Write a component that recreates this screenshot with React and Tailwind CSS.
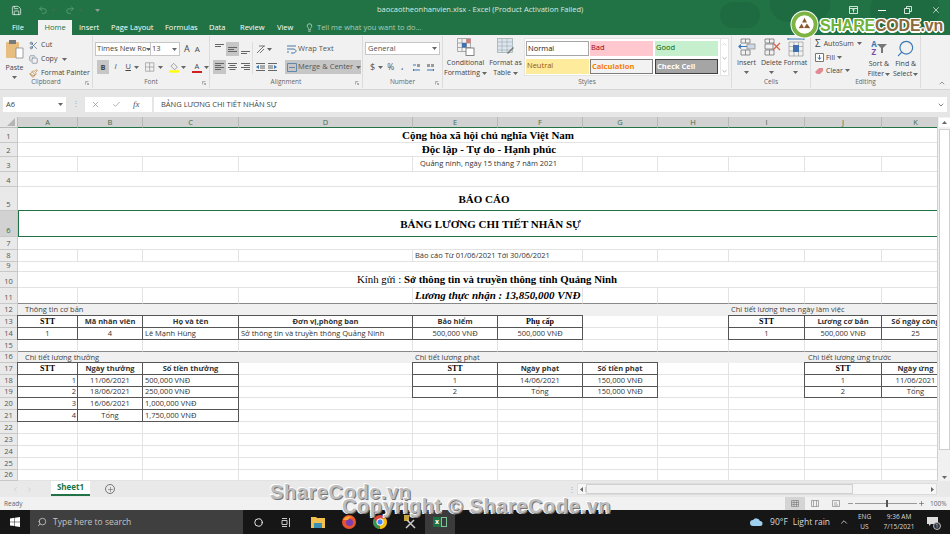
import React from "react";
import {
  Save,
  Undo2,
  Redo2,
  Lightbulb,
  Scissors,
  Copy,
  Paintbrush,
  Search,
  Circle,
  Plus,
  Minus,
  ChevronUp,
  ChevronDown,
  ChevronLeft,
  ChevronRight,
  X,
  Check,
} from "lucide-react";

const UI = "font-['Open_Sans','Noto_Sans',sans-serif]";
const SERIF = "font-['Liberation_Serif',serif]";

function Caret({ className = "" }) {
  return (
    <svg width="5" height="3" viewBox="0 0 5 3" className={`shrink-0 ${className}`}>
      <path d="M0 0h5L2.5 3z" fill="#666" />
    </svg>
  );
}

function TitleBar() {
  return (
    <div className={`relative h-[35px] bg-[#217346] text-white ${UI} overflow-hidden`}>
      <div className="absolute right-[120px] top-[-14px] w-[60px] h-[36px] rounded-full bg-[#1f6b41]" />
      <div className="absolute right-[190px] top-[2px] w-[40px] h-[26px] rounded-full bg-[#1f6b41]" />
      <div className="absolute right-[10px] top-[-10px] w-[70px] h-[40px] rounded-full bg-[#1f6b41]" />
      <div className="relative flex items-center h-[20px] pl-[11px]">
        <Save size={11} strokeWidth={1.5} />
        <Undo2 size={10} className="ml-[16px] text-[#5f9c7b]" />
        <Caret className="ml-[3px] opacity-30" />
        <Redo2 size={10} className="ml-[9px] text-[#5f9c7b]" />
        <Caret className="ml-[3px] opacity-30" />
        <Caret className="ml-[12px] invert" />
        <div className="w-[194px] ml-[277px] text-[7.5px] whitespace-nowrap text-[#dbe9e1]">
          baocaotheonhanvien.xlsx - Excel (Product Activation Failed)
        </div>
        <div className="ml-auto flex items-center pr-[9px] gap-[18px]">
          <svg width="9" height="8" viewBox="0 0 9 8">
            <path d="M.5.5h8v7h-8zM.5 2.5h8M4.5 6.5v-3M3 4.5l1.5-1.5L6 4.5" fill="none" stroke="#fff" strokeWidth=".8" />
          </svg>
          <div className="w-[8px] h-px bg-white ml-[2px]" />
          <svg width="8" height="8" viewBox="0 0 8 8">
            <path d="M.5 2.5h5v5h-5zM2.5 2.5v-2h5v5h-2" fill="none" stroke="#fff" strokeWidth=".8" />
          </svg>
          <X size={10} strokeWidth={1.6} className="ml-[1px]" />
        </div>
      </div>
      <div className="relative flex items-end h-[15px] text-[7.5px] leading-[15px]">
        <span className="ml-[12px] w-[26px]">File</span>
        <span className="w-[34px] h-[15px] bg-[#f1f1f1] text-[#217346] text-center">Home</span>
        <span className="ml-[7px] w-[32px]">Insert</span>
        <span className="w-[54px]">Page Layout</span>
        <span className="w-[44px]">Formulas</span>
        <span className="w-[31px]">Data</span>
        <span className="w-[37px]">Review</span>
        <span className="w-[28px]">View</span>
        <Lightbulb size={9} className="mb-[3px] text-[#cfe0d6]" />
        <span className="ml-[3px] text-[#a9cbb8]">Tell me what you want to do...</span>
      </div>
    </div>
  );
}

function Group({ w, label, corner = true, children }) {
  return (
    <div className={`relative flex flex-col h-[52px] mt-[1px] border-r border-[#dcdcdc] shrink-0 ${w}`}>
      <div className="flex-1 min-h-0">{children}</div>
      <div className="h-[11px] text-center text-[6.5px] leading-[10px] text-[#666]">{label}</div>
      {corner && (
        <svg width="4" height="4" viewBox="0 0 4 4" className="absolute right-[3px] bottom-[3px]">
          <path d="M.5.5h3M.5.5v3M3.5 3.5L1.5 1.5M3.5 2v1.5H2" fill="none" stroke="#888" strokeWidth=".6" />
        </svg>
      )}
    </div>
  );
}

function BigBtn({ icon, lines, w }) {
  return (
    <div className={`flex flex-col items-center text-[7px] leading-[10px] text-[#444] ${w}`}>
      <div className="h-[22px] flex items-center">{icon}</div>
      {lines.map((l, i) => (
        <div key={i} className="whitespace-nowrap flex items-center gap-[2px]">
          {l}
        </div>
      ))}
    </div>
  );
}

function Clipboard() {
  return (
    <Group w="w-[93px]" label="Clipboard">
      <div className="flex">
        <div className="w-[29px] flex flex-col items-center text-[7px] text-[#444] leading-[10px]">
          <svg width="20" height="20" viewBox="0 0 20 20" className="mt-[3px]">
            <rect x="1" y="3" width="13" height="16" rx="1" fill="#e8bd80" />
            <rect x="4" y="1" width="7" height="4" fill="#7a7a7a" />
            <path d="M11 9h7v10h-7z" fill="#fff" stroke="#888" strokeWidth=".8" />
          </svg>
          <div className="mt-[4px]">Paste</div>
          <Caret className="mt-[3px]" />
        </div>
        <div className="flex flex-col text-[7px] leading-[14px] text-[#444] pt-[2px]">
          <div className="flex items-center gap-[3px]">
            <Scissors size={9} className="text-[#4a6a8a]" /> Cut
          </div>
          <div className="flex items-center gap-[3px]">
            <Copy size={9} className="text-[#7a8a9a]" /> Copy <Caret className="ml-[2px]" />
          </div>
          <div className="flex items-center gap-[3px] whitespace-nowrap">
            <Paintbrush size={9} className="text-[#b8863c]" /> Format Painter
          </div>
        </div>
      </div>
    </Group>
  );
}

function Bars({ lines, align = "left" }) {
  return (
    <svg width="9" height="8" viewBox="0 0 9 8">
      {lines.map((y, i) => {
        const w = i % 2 ? 6 : 9;
        const x = align === "center" ? (9 - w) / 2 : align === "right" ? 9 - w : 0;
        return <rect key={y} x={x} y={y} width={w} height="1" fill="#666" />;
      })}
    </svg>
  );
}

function Font() {
  return (
    <Group w="w-[117px]" label="Font">
      <div className="pl-[2px] pt-[6px] text-[7.5px] text-[#444]">
        <div className="flex h-[14px]">
          <div className="w-[56px] bg-white border border-[#c6c6c6] flex items-center justify-between px-[1px] whitespace-nowrap overflow-hidden">
            Times New Ro <Caret />
          </div>
          <div className="w-[29px] bg-white border border-l-0 border-[#c6c6c6] flex items-center justify-between pl-[1px] pr-[2px]">
            13 <Caret />
          </div>
          <div className="ml-[4px] text-[9px] leading-[14px]">A</div>
          <div className="ml-[5px] text-[8px] leading-[14px]">A</div>
        </div>
        <div className="flex items-center h-[14px] mt-[4px] ml-[2px]">
          <div className="w-[13px] h-[14px] bg-[#c6c6c6] text-center font-bold leading-[14px]">B</div>
          <div className="w-[14px] text-center italic">I</div>
          <div className="w-[13px] text-center underline">U</div>
          <Caret />
          <svg width="10" height="10" viewBox="0 0 10 10" className="ml-[6px]">
            <path d="M.5.5h9v9h-9zM5 .5v9M.5 5h9" fill="none" stroke="#999" strokeWidth=".8" />
          </svg>
          <Caret className="ml-[3px]" />
          <svg width="11" height="11" viewBox="0 0 11 11" className="ml-[6px]">
            <path d="M5 1l4 4-3 3-4-4z" fill="#eee" stroke="#777" strokeWidth=".7" />
            <rect y="8.5" width="11" height="2.5" fill="#ffff00" />
          </svg>
          <Caret className="ml-[2px]" />
          <div className="ml-[6px] w-[11px] text-center leading-[9px] border-b-[2px] border-[#d02020]">A</div>
          <Caret className="ml-[2px]" />
        </div>
      </div>
    </Group>
  );
}

function Alignment() {
  return (
    <Group w="w-[153px]" label="Alignment">
      <div className="flex pl-[3px] pt-[6px] text-[7.5px] text-[#555]">
        <div className="flex flex-col gap-[4px] w-[39px] shrink-0">
          <div className="flex h-[14px] items-center">
            <div className="w-[13px] flex justify-center mb-[3px]"><Bars lines={[0, 2]} /></div>
            <div className="w-[13px] h-[14px] bg-[#c6c6c6] flex items-center justify-center"><Bars lines={[2, 4, 6]} /></div>
            <div className="w-[13px] flex justify-center mt-[3px]"><Bars lines={[4, 6]} /></div>
          </div>
          <div className="flex h-[14px] items-center">
            <div className="w-[13px] h-[14px] bg-[#c6c6c6] flex items-center justify-center"><Bars lines={[0, 2, 4, 6]} /></div>
            <div className="w-[13px] flex justify-center"><Bars lines={[0, 2, 4, 6]} align="center" /></div>
            <div className="w-[13px] flex justify-center"><Bars lines={[0, 2, 4, 6]} align="right" /></div>
          </div>
        </div>
        <div className="flex flex-col gap-[4px] w-[33px] shrink-0 pl-[1px] border-l border-[#dcdcdc] h-[32px]">
          <div className="flex h-[14px] items-center pl-[2px] gap-[1px]">
            <svg width="10" height="10" viewBox="0 0 10 10">
              <path d="M1 9l7-7M3 2h6M4 9l4-4" fill="none" stroke="#666" strokeWidth=".9" />
            </svg>
            <Caret />
          </div>
          <div className="flex h-[14px] items-center pl-[2px] gap-[3px]">
            <svg width="9" height="8" viewBox="0 0 9 8"><path d="M0 .5h9M4 3h5M4 5h5M0 7.5h9" stroke="#666" /><path d="M3 2L0 4l3 2z" fill="#3a78b5" /></svg>
            <svg width="9" height="8" viewBox="0 0 9 8"><path d="M0 .5h9M0 3h5M0 5h5M0 7.5h9" stroke="#666" /><path d="M6 2l3 2-3 2z" fill="#3a78b5" /></svg>
          </div>
        </div>
        <div className="flex flex-col gap-[4px] shrink-0">
          <div className="flex h-[14px] items-center gap-[1px] pl-[2px] whitespace-nowrap">
            <svg width="10" height="9" viewBox="0 0 10 9"><path d="M0 1h9M0 4h6c4 0 4 4 0 4H4M0 7h2" fill="none" stroke="#4a78a5" /></svg>
            Wrap Text
          </div>
          <div className="flex h-[14px] w-[76px] items-center gap-[1px] pl-[2px] bg-[#c6c6c6] whitespace-nowrap">
            <svg width="10" height="9" viewBox="0 0 10 9" className="shrink-0"><path d="M.5.5h9v8h-9zM2 4.500h6" fill="none" stroke="#4a78a5" strokeWidth=".8" /></svg>
            Merge & Center <Caret className="ml-[2px]" />
          </div>
        </div>
      </div>
    </Group>
  );
}

function NumberGroup() {
  return (
    <Group w="w-[80px]" label="Number">
      <div className="pl-[2px] pt-[6px] text-[7.5px] text-[#555]">
        <div className="w-[75px] h-[13px] bg-white border border-[#c6c6c6] flex items-center justify-between px-[2px]">
          General <Caret />
        </div>
        <div className="flex items-center h-[14px] mt-[5px] pl-[5px]">
          <span className="text-[9px]">$</span>
          <Caret className="ml-[3px]" />
          <span className="ml-[4px] text-[8.5px]">%</span>
          <span className="ml-[7px] font-bold">,</span>
          <svg width="9" height="9" viewBox="0 0 9 9" className="ml-[9px]"><path d="M1 2h3M1 7h7M2 6l-1 1 1 1" fill="none" stroke="#3a78b5" /><path d="M5 1h3v3H5z" fill="#999" /></svg>
          <svg width="9" height="9" viewBox="0 0 9 9" className="ml-[5px]"><path d="M1 7h7M7 6l1 1-1 1" fill="none" stroke="#3a78b5" /><path d="M1 1h3v3H1zM5 1h3v3H5z" fill="#999" /></svg>
        </div>
      </div>
    </Group>
  );
}

function StyleCell({ className, children }) {
  return <div className={`h-[15px] w-[63px] px-[1px] text-[7.5px] leading-[13px] ${className}`}>{children}</div>;
}

function Styles() {
  return (
    <Group w="w-[289px]" label="Styles" corner={false}>
      <div className="flex">
        <BigBtn
          w="w-[45px]"
          lines={["Conditional", <>Formatting <Caret /></>]}
          icon={
            <svg width="18" height="18" viewBox="0 0 18 18">
              <path d="M.5.5h13v13H.5zM.5 5h13M.5 9.500h13M5 .5v13M9.500.5v13" fill="none" stroke="#999" strokeWidth=".8" />
              <rect x="5" y="5" width="4.500" height="4.500" fill="#3f6fae" />
              <rect x="9.500" y="1" width="4" height="4" fill="#d87a7a" />
              <rect x="9" y="10" width="8" height="7.500" fill="#fff" stroke="#666" strokeWidth=".8" />
            </svg>
          }
        />
        <BigBtn
          w="w-[35px]"
          lines={["Format as", <>Table <Caret /></>]}
          icon={
            <svg width="18" height="18" viewBox="0 0 18 18">
              <rect x=".5" y=".5" width="15" height="14" fill="#dde6f0" stroke="#9aa" strokeWidth=".7" />
              <path d="M.5 4h15M.5 8h15M.5 12h15M5 .5v14M10 .5v14" stroke="#9aa" strokeWidth=".6" />
              <path d="M10 15l6-6 1 1-6 6z" fill="#777" />
            </svg>
          }
        />
        <div className="ml-[1px] mt-[2px] w-[205px] h-[38px] bg-white flex border border-[#e4e4e4]">
          <div className="grid grid-cols-[64px_65px_63px] gap-y-[2px] pt-[2px] pl-[1px]">
            <StyleCell className="bg-white border border-[#a6a6a6] text-[#222]">Normal</StyleCell>
            <StyleCell className="bg-[#ffc7ce] text-[#9c0006]">Bad</StyleCell>
            <StyleCell className="bg-[#c6efce] text-[#006100]">Good</StyleCell>
            <StyleCell className="bg-[#ffeb9c] text-[#9c5700]">Neutral</StyleCell>
            <StyleCell className="bg-[#f2f2f2] text-[#fa7d00] font-bold border border-[#7f7f7f]">Calculation</StyleCell>
            <StyleCell className="bg-[#a5a5a5] text-white font-bold border border-[#3f3f3f]">Check Cell</StyleCell>
          </div>
          <div className="flex-1 flex flex-col items-center border-l border-[#e4e4e4] ml-[2px]">
            <ChevronUp size={7} className="mt-[2px] text-[#bbb]" />
            <ChevronDown size={7} className="mt-[7px] text-[#777]" />
            <ChevronDown size={7} className="mt-[7px] text-[#777]" />
          </div>
        </div>
      </div>
    </Group>
  );
}

function CellsGroup() {
  return (
    <Group w="w-[79px]" label="Cells" corner={false}>
      <div className="flex pl-[2px]">
        <BigBtn
          w="w-[25px]"
          lines={["Insert", <Caret className="mt-[3px]" />]}
          icon={
            <svg width="18" height="18" viewBox="0 0 18 18">
              <path d="M3 1h9v4H3zM3 12h9v5H3zM7.500 1v4M7.500 12v5" fill="none" stroke="#777" strokeWidth=".8" />
              <path d="M1 8.500h8M3 6.500l-2 2 2 2" fill="none" stroke="#3a78b5" strokeWidth="1.200" />
              <rect x="9" y="6" width="8" height="5" fill="#cfd8e3" stroke="#777" strokeWidth=".6" />
            </svg>
          }
        />
        <BigBtn
          w="w-[25px]"
          lines={["Delete", <Caret className="mt-[3px]" />]}
          icon={
            <svg width="18" height="18" viewBox="0 0 18 18">
              <path d="M2 1h9v4H2zM2 12h9v5H2zM6.500 1v4M6.500 12v5M2 6h8v5H2z" fill="none" stroke="#777" strokeWidth=".8" />
              <path d="M10 5l7 7M17 5l-7 7" stroke="#d0634a" strokeWidth="1.300" />
            </svg>
          }
        />
        <BigBtn
          w="w-[23px]"
          lines={["Format", <Caret className="mt-[3px]" />]}
          icon={
            <svg width="18" height="20" viewBox="0 0 18 20">
              <path d="M1 2h16M1 1v2M17 1v2" stroke="#3a78b5" />
              <path d="M2 5h14v14H2zM2 9.500h14M2 14h14M7 5v14M11.500 5v14" fill="none" stroke="#999" strokeWidth=".7" />
              <rect x="6" y="8" width="6" height="7" fill="#3f6fae" />
            </svg>
          }
        />
      </div>
    </Group>
  );
}

function Editing() {
  return (
    <Group w="w-[110px]" label="Editing" corner={false}>
      <div className="flex text-[7px] text-[#444] leading-[13.5px] pl-[4px] pt-[1px]">
        <div className="w-[52px]">
          <div className="flex items-center gap-[3px]"><span className="text-[10px] leading-[13px]">Σ</span> AutoSum <Caret /></div>
          <div className="flex items-center gap-[2px]">
            <svg width="9" height="9" viewBox="0 0 9 9"><path d="M.5.5h8v8h-8z" fill="#fff" stroke="#777" /><path d="M4.500 2v4M3 4.500l1.500 2 1.500-2" fill="none" stroke="#3a78b5" /></svg>
            Fill <Caret />
          </div>
          <div className="flex items-center gap-[2px]">
            <svg width="9" height="8" viewBox="0 0 9 8"><path d="M0 5l4-4h4v3L5 7H2z" fill="#e28a92" /></svg>
            Clear <Caret />
          </div>
        </div>
        <BigBtn
          w="w-[25px]"
          lines={["Sort &", <>Filter <Caret className="-ml-[1px]" /></>]}
          icon={
            <div className="flex items-center text-[8px] font-bold leading-[8px] text-[#3a78b5]">
              <div className="text-center">A<br /><span className="text-[#7a4fa5]">Z</span></div>
              <svg width="10" height="9" viewBox="0 0 10 9"><path d="M0 0h10L6 4v5H4V4z" fill="#777" /></svg>
            </div>
          }
        />
        <BigBtn
          w="w-[29px]"
          lines={["Find &", <>Select <Caret className="-ml-[1px]" /></>]}
          icon={<Search size={19} strokeWidth={1.5} className="text-[#3a78b5] -scale-x-100" />}
        />
      </div>
    </Group>
  );
}

function Ribbon() {
  return (
    <div className={`relative h-[55px] bg-[#f1f1f1] border-b border-[#d4d4d4] flex ${UI}`}>
      <Clipboard />
      <Font />
      <Alignment />
      <NumberGroup />
      <Styles />
      <CellsGroup />
      <Editing />
      <ChevronUp size={8} className="absolute right-[4px] bottom-[2px] text-[#666]" />
    </div>
  );
}

function FormulaBar() {
  return (
    <div className={`h-[27px] bg-[#e6e6e6] flex items-start pt-[7px] pl-[3px] pr-[3px] text-[7.5px] text-[#444] ${UI}`}>
      <div className="w-[63px] h-[15px] bg-white flex items-center justify-between px-[3px]">
        A6 <Caret />
      </div>
      <div className="w-[19px] text-center leading-[13px] text-[#aaa]">⋮</div>
      <div className="w-[67px] h-[15px] bg-white flex items-center gap-[12px] pl-[6px] text-[#999]">
        <X size={9} />
        <Check size={9} />
        <span className={`${SERIF} italic text-[#555] text-[9px]`}>fx</span>
      </div>
      <div className="ml-[2px] flex-1 h-[15px] bg-white flex items-center justify-between pl-[7px] pr-[2px]">
        BẢNG LƯƠNG CHI TIẾT NHÂN SỰ
        <ChevronDown size={8} />
      </div>
    </div>
  );
}

const GRID_LINE = "border-r border-b border-[#e3e3e3]";
const COLS = ["A", "B", "C", "D", "E", "F", "G", "H", "I", "J", "K"];

// shorthand cell makers
const blank = (span = 1) => ({ span });
const under = () => ({ strong: true });
const head = (text, serif) => ({ text, dark: true, bold: true, serif, align: "center" });
const val = (text, align = "center") => ({ text, dark: true, align });
const sep = (text, span, pl = "pl-[2px]") => ({ text, span, gray: true, pl });

const ROWS = [
  { h: 1, cells: [{ span: 11, title: "Cộng hòa xã hội chủ nghĩa Việt Nam", pl: "pl-[8px]" }] },
  { h: 2, cells: [{ span: 11, title: "Độc lập - Tự do - Hạnh phúc", pl: "pl-[10px]" }] },
  { h: 3, cells: [blank(), blank(), blank(), blank(), { span: 2, text: "Quảng ninh, ngày 15 tháng 7 năm 2021", pl: "pl-[7px]" }, blank(), blank(), blank(), blank(), blank()] },
  { h: 4, cells: [blank(11)] },
  { h: 5, cells: [{ span: 11, title: "BÁO CÁO", big: true }] },
  { h: 6, cells: [{ span: 11, title: "BẢNG LƯƠNG CHI TIẾT NHÂN SỰ", big: true, selected: true, pl: "pl-[13px]" }] },
  { h: 7, cells: [blank(11)] },
  { h: 8, cells: [blank(), blank(), blank(), blank(), { span: 2, text: "Báo cáo Từ 01/06/2021 Tới 30/06/2021", pl: "pl-[2px]" }, blank(), blank(), blank(), blank(), blank()] },
  { h: 9, cells: [blank(11)] },
  { h: 10, cells: [{ span: 11, letter: true }] },
  { h: 11, cells: [under(), under(), under(), under(), { span: 2, salary: true }, under(), under(), under(), under(), under()] },
  { h: 12, cells: [sep("Thông tin cơ bản", 8, "pl-[7px]"), sep("Chi tiết lương theo ngày làm việc", 3)] },
  { h: 13, cells: [head("STT", true), head("Mã nhân viên"), head("Họ và tên"), head("Đơn vị,phòng ban"), head("Bảo hiểm"), head("Phụ cấp", true), blank(), blank(), head("STT", true), head("Lương cơ bản"), head("Số ngày công")] },
  { h: 14, cells: [val("1"), val("4"), val("Lê Mạnh Hùng", "left"), val("Sở thông tin và truyền thông Quảng Ninh", "left"), val("500,000 VNĐ"), val("500,000 VNĐ"), blank(), blank(), val("1"), val("500,000 VNĐ"), val("25")] },
  { h: 15, cells: Array.from({ length: 11 }, under) },
  { h: 16, cells: [sep("Chi tiết lương thưởng", 4, "pl-[7px]"), sep("Chi tiết lương phạt", 5), sep("Chi tiết lương ứng trước", 2, "pl-[3px]")] },
  { h: 17, cells: [head("STT", true), head("Ngày thưởng"), head("Số tiền thưởng"), blank(), head("STT", true), head("Ngày phạt"), head("Số tiền phạt"), blank(), blank(), head("STT", true), head("Ngày ứng")] },
  { h: 18, cells: [val("1", "right"), val("11/06/2021"), val("500,000 VNĐ", "left"), blank(), val("1"), val("14/06/2021"), val("150,000 VNĐ"), blank(), blank(), val("1"), val("11/06/2021")] },
  { h: 19, cells: [val("2", "right"), val("18/06/2021"), val("250,000 VNĐ", "left"), blank(), val("2"), val("Tổng"), val("150,000 VNĐ"), blank(), blank(), val("2"), val("Tổng")] },
  { h: 20, cells: [val("3", "right"), val("16/06/2021"), val("1,000,000 VNĐ", "left"), ...Array.from({ length: 8 }, () => blank())] },
  { h: 21, cells: [val("4", "right"), val("Tổng"), val("1,750,000 VNĐ", "left"), ...Array.from({ length: 8 }, () => blank())] },
  ...[22, 23, 24, 25, 26].map((h) => ({ h, cells: Array.from({ length: 11 }, () => blank()) })),
];

const SPANS = { 1: "col-span-1", 2: "col-span-2", 3: "col-span-3", 4: "col-span-4", 5: "col-span-5", 8: "col-span-8", 11: "col-span-11" };
const ALIGN = { center: "justify-center text-center", left: "justify-start pl-[2px]", right: "justify-end pr-[1px]" };

function Cell({ cell }) {
  const span = SPANS[cell.span || 1];
  if (cell.dark) {
    return (
      <div
        className={`${span} relative z-10 -ml-px -mt-px border border-[#555] bg-white flex items-center overflow-hidden whitespace-nowrap text-[7.5px] text-[#333] ${ALIGN[cell.align]} ${cell.bold ? "font-bold" : ""} ${cell.serif ? `${SERIF} text-[8px] text-black` : ""}`}
      >
        {cell.text}
      </div>
    );
  }
  if (cell.gray) {
    return (
      <div className={`${span} bg-[#f0f0f0] flex items-center whitespace-nowrap text-[7.5px] text-[#444] ${cell.pl}`}>
        {cell.text}
      </div>
    );
  }
  if (cell.title) {
    return (
      <div
        className={`${span} flex items-center justify-center ${cell.pl || ""} ${SERIF} font-bold text-black whitespace-nowrap ${cell.big ? "text-[11px] pt-[1px]" : "text-[11px]"} ${
          cell.selected ? "border border-[#217346] relative z-10 -mt-px" : "border-b border-[#e3e3e3]"
        }`}
      >
        {cell.title}
      </div>
    );
  }
  if (cell.letter) {
    return (
      <div className={`${span} flex items-center justify-center pl-[7px] ${SERIF} text-[10.8px] text-black whitespace-nowrap ${GRID_LINE}`}>
        Kính gửi :&nbsp;<b>Sở thông tin và truyền thông tỉnh Quảng Ninh</b>
      </div>
    );
  }
  if (cell.salary) {
    return (
      <div className={`${span} flex items-center pl-[2px] ${SERIF} font-bold italic text-[11px] text-black whitespace-nowrap border-r border-[#e3e3e3] border-b border-b-[#888]`}>
        Lương thực nhận : 13,850,000 VNĐ
      </div>
    );
  }
  if (cell.strong) {
    return <div className={`${span} border-r border-[#e3e3e3] border-b border-b-[#888]`} />;
  }
  return (
    <div className={`${span} flex items-center whitespace-nowrap text-[7.5px] text-[#333] ${cell.pl || ""} ${GRID_LINE}`}>
      {cell.text}
    </div>
  );
}

function Sheet() {
  return (
    <div className="flex h-[364px] font-['Open_Sans',sans-serif]">
      <div className="w-[937px] shrink-0 grid grid-cols-[18px_60px_65px_96px_174px_85px_85px_75px_71px_76px_77px_68px] grid-rows-[11px_15px_14px_15px_15px_24px_26px_13px_12px_10px_16px_16px_12px_12px_12px_12px_11px_12px_12px_11px_12px_12px_12px_12px_12px_12px_11px] overflow-hidden">
        <div className="bg-[#e6e6e6] border-r border-b border-[#bbb] relative">
          <svg width="8" height="8" viewBox="0 0 8 8" className="absolute right-[2px] bottom-[1px]">
            <path d="M8 0v8H0z" fill="#b5b5b5" />
          </svg>
        </div>
        {COLS.map((c) => (
          <div key={c} className="bg-[#d2d2d2] border-r border-[#b8b8b8] border-b border-b-[#217346] text-center text-[7.5px] leading-[11px] text-[#3f6b52]">
            {c}
          </div>
        ))}
        {ROWS.map((row) => (
          <React.Fragment key={row.h}>
            <div
              className={`border-r border-b border-[#c8c8c8] flex items-end justify-center text-[7.5px] leading-[11px] ${
                row.h === 6 ? "bg-[#d2d2d2] text-[#217346]" : "bg-[#e9e9e9] text-[#555]"
              }`}
            >
              {row.h}
            </div>
            {row.cells.map((cell, i) => (
              <Cell key={i} cell={cell} />
            ))}
          </React.Fragment>
        ))}
      </div>
      <div className="flex-1 bg-[#f1f1f1] border-l border-[#d0d0d0] flex flex-col items-center pt-[1px]">
        <div className="w-[11px] h-[9px] bg-white flex items-center justify-center">
          <svg width="5" height="3" viewBox="0 0 5 3"><path d="M0 3h5L2.500 0z" fill="#666" /></svg>
        </div>
        <div className="w-[11px] h-[321px] bg-white border border-[#cfcfcf] mt-[2px]" />
        <div className="mt-auto mb-[2px]">
          <svg width="5" height="3" viewBox="0 0 5 3"><path d="M0 0h5L2.500 3z" fill="#666" /></svg>
        </div>
      </div>
    </div>
  );
}

function SheetTabs() {
  return (
    <div className={`h-[16px] bg-[#e9e9e9] flex items-center text-[#999] ${UI}`}>
      <ChevronLeft size={7} className="ml-[12px] text-[#c0c0c0]" />
      <ChevronRight size={7} className="ml-[7px] text-[#c0c0c0]" />
      <div className="ml-[18px] w-[39px] h-[15px] -mt-px bg-white border-b-[2px] border-[#217346] text-center text-[8px] leading-[12px] font-bold text-[#217346]">
        Sheet1
      </div>
      <div className="ml-[15px] w-[10px] h-[10px] rounded-full border border-[#777] flex items-center justify-center">
        <Plus size={7} className="text-[#666]" />
      </div>
      <div className="ml-[453px] w-[2px] text-[8px] leading-[8px] text-[#aaa]">⋮</div>
      <div className="ml-[7px] w-[360px] h-[12px] bg-[#f6f6f6] border border-[#dcdcdc] flex items-center">
        <div className="w-[8px] flex justify-center border-r border-[#ccc]">
          <svg width="3" height="5" viewBox="0 0 3 5"><path d="M3 0v5L0 2.500z" fill="#666" /></svg>
        </div>
        <div className="w-[267px] h-[10px] bg-[#f1f1f1] border border-[#d0d0d0]" />
        <div className="ml-auto w-[8px] flex justify-center">
          <svg width="3" height="5" viewBox="0 0 3 5"><path d="M0 0v5l3-2.500z" fill="#666" /></svg>
        </div>
      </div>
    </div>
  );
}

function StatusBar() {
  return (
    <div className={`h-[13px] bg-[#f1f1f1] flex items-center pl-[4px] text-[6.5px] text-[#666] ${UI}`}>
      Ready
      <div className="ml-auto flex items-center">
        <div className="w-[20px] h-[13px] bg-[#d4d4d4] flex items-center justify-center">
          <svg width="8" height="7" viewBox="0 0 8 7"><path d="M.5.500h7v6h-7zM.5 2.500h7M.5 4.500h7M3 .5v6M5.500.5v6" fill="none" stroke="#777" strokeWidth=".6" /></svg>
        </div>
        <div className="w-[20px] flex justify-center">
          <svg width="8" height="7" viewBox="0 0 8 7"><path d="M.5.500h7v6h-7zM2.500.5v6M5.500.5v6" fill="none" stroke="#777" strokeWidth=".6" /></svg>
        </div>
        <div className="w-[21px] flex justify-center">
          <svg width="8" height="7" viewBox="0 0 8 7"><path d="M.5.500h7v6h-7zM2 3h3M2 5h4" fill="none" stroke="#777" strokeWidth=".6" /></svg>
        </div>
        <Minus size={7} className="ml-[1px] text-[#555]" />
        <div className="relative w-[62px] h-px bg-[#999] ml-[1px]">
          <div className="absolute left-[31px] top-[-3px] w-[2px] h-[7px] bg-[#555]" />
        </div>
        <Plus size={7} className="ml-[1px] text-[#555]" />
        <span className="ml-[5px] mr-[4px] w-[16px]">100%</span>
      </div>
    </div>
  );
}

function Taskbar() {
  return (
    <div className={`relative h-[24px] bg-[#161616] flex items-center text-[#d8d8d8] ${UI}`}>
      <div className="w-[30px] flex justify-center">
        <svg width="10" height="10" viewBox="0 0 10 10">
          <path d="M0 1.500L4.500.8v3.900H0zM5 .7L10 0v4.700H5zM0 5.200h4.500v3.900L0 8.500zM5 5.200h5V10l-5-.7z" fill="#fff" />
        </svg>
      </div>
      <div className="w-[213px] h-[24px] bg-[#3f3f3f] flex items-center pl-[7px] gap-[6px] text-[8.5px] text-[#c4c4c4]">
        <Search size={10} className="-scale-x-100" />
        Type here to search
      </div>
      <div className="w-[28px] flex justify-center ml-[1px]">
        <Circle size={9} strokeWidth={2.4} className="text-white" />
      </div>
      <div className="w-[28px] flex justify-center">
        <svg width="10" height="9" viewBox="0 0 10 9"><path d="M1 .5h5M1 8.500h5M1 2.500h5v4H1zM8.500 0v9" fill="none" stroke="#ddd" strokeWidth=".9" /></svg>
      </div>
      <div className="w-[30px] flex justify-center ml-[3px]">
        <svg width="14" height="12" viewBox="0 0 14 12">
          <path d="M0 1h5l1 1h8v10H0z" fill="#f2c14e" />
          <rect x="3" y="7" width="8" height="5" fill="#3a8fb7" />
        </svg>
      </div>
      <div className="w-[31px] flex justify-center">
        <svg width="14" height="14" viewBox="0 0 14 14">
          <circle cx="7" cy="7" r="7" fill="#e8552c" />
          <circle cx="7.500" cy="7.500" r="3.500" fill="#7a3fb0" />
          <path d="M1 5c2-4 7-5 10-2-3-1-4 0-5 2z" fill="#f9a531" />
        </svg>
      </div>
      <div className="w-[31px] flex justify-center">
        <svg width="14" height="14" viewBox="0 0 14 14">
          <circle cx="7" cy="7" r="7" fill="#db4437" />
          <path d="M7 14a7 7 0 0 1-6-10.500L4.500 9z" fill="#2e9b4f" />
          <path d="M7 14a7 7 0 0 0 6-10.500H7z" fill="#f4c20d" />
          <circle cx="7" cy="7" r="3.200" fill="#4285f4" stroke="#fff" />
        </svg>
      </div>
      <div className="w-[30px] flex justify-center">
        <svg width="14" height="14" viewBox="0 0 14 14">
          <rect x="1" y="0" width="5" height="6" fill="#c7a23a" />
          <path d="M3 13l8-8M4 5l8 8" stroke="#ccc" strokeWidth="1.500" />
        </svg>
      </div>
      <div className="w-[30px] h-[24px] bg-[#3b3b3b] flex items-center justify-center">
        <div className="flex items-center">
          <span className="w-[8px] h-[10px] bg-[#1d7044] text-white text-[7px] leading-[10px] text-center font-bold">x</span>
          <span className="w-[6px] h-[10px] border border-[#7ec39b]" />
        </div>
      </div>
      <div className="ml-auto flex items-center text-[8.5px] mr-[12px]">
        <svg width="13" height="9" viewBox="0 0 13 9">
          <path d="M3 8a3 3 0 0 1 0-6 4 4 0 0 1 7 1 2.500 2.500 0 0 1 0 5z" fill="#9fd0ef" />
        </svg>
        <span className="ml-[7px]">90°F</span>
        <span className="ml-[5px]">Light rain</span>
        <ChevronUp size={10} className="ml-[9px]" />
        <div className="ml-[7px] text-center text-[6.5px] leading-[10px] w-[17px]">ENG<br />US</div>
        <div className="ml-[9px] text-center text-[6.5px] leading-[10px] w-[34px]">9:36 AM<br />7/15/2021</div>
        <div className="relative ml-[11px] w-[11px] h-[11px]">
          <svg width="11" height="10" viewBox="0 0 11 10"><path d="M0 0h11v7H4L2 9V7H0z" fill="#ddd" /></svg>
          <span className="absolute right-[-3px] bottom-[-2px] w-[8px] h-[8px] rounded-full bg-[#333] border border-[#bbb] text-[5px] leading-[6px] text-center">1</span>
        </div>
      </div>
    </div>
  );
}

function Watermarks() {
  const mark =
    "absolute whitespace-nowrap font-['Liberation_Sans',sans-serif] font-bold tracking-[.6px] text-[#bdbdbd] [text-shadow:1px_1px_0_#777,-1px_-1px_0_#fff,1px_-1px_0_#eee,-1px_1px_0_#eee]";
  return (
    <>
      <div className={`${mark} left-[270px] top-[480px] text-[20px] leading-[24px]`}>ShareCode.vn</div>
      <div className={`${mark} left-[342px] top-[494px] text-[20px] leading-[24px]`}>Copyright © ShareCode.vn</div>
      <div className="absolute left-[790px] top-[10px] flex items-center">
        <svg width="29" height="29" viewBox="0 0 30 30" className="shrink-0">
          <circle cx="15" cy="15" r="14.500" fill="#fff" />
          <circle cx="15" cy="15" r="11.500" fill="none" stroke="#7cb342" strokeWidth="4" />
          <circle cx="15" cy="15" r="7" fill="#fff" />
          <path d="M15 8l2.500 5h-5zM9 19l3-5 2.500 4.500zM21 19l-6.500-.5 3-4.500z" fill="#8a5a2c" />
        </svg>
        <div className="ml-[1px] mt-[3px] font-['Liberation_Sans',sans-serif] font-bold text-[16px] leading-[20px] tracking-[-.2px] whitespace-nowrap [text-shadow:1.500px_0_0_#fff,-1.500px_0_0_#fff,0_1.500px_0_#fff,0_-1.500px_0_#fff,1px_1px_0_#fff,-1px_-1px_0_#fff,1px_-1px_0_#fff,-1px_1px_0_#fff]">
          <span className="text-[#6fb33a]">SHARE</span>
          <span className="text-[#8a6a3c]">CODE</span>
          <span className="text-[#8a6a3c]">.vn</span>
        </div>
      </div>
    </>
  );
}

export default function App() {
  return (
    <div className="relative w-[950px] h-[534px] overflow-hidden bg-white">
      <TitleBar />
      <Ribbon />
      <FormulaBar />
      <Sheet />
      <SheetTabs />
      <StatusBar />
      <Taskbar />
      <Watermarks />
    </div>
  );
}
